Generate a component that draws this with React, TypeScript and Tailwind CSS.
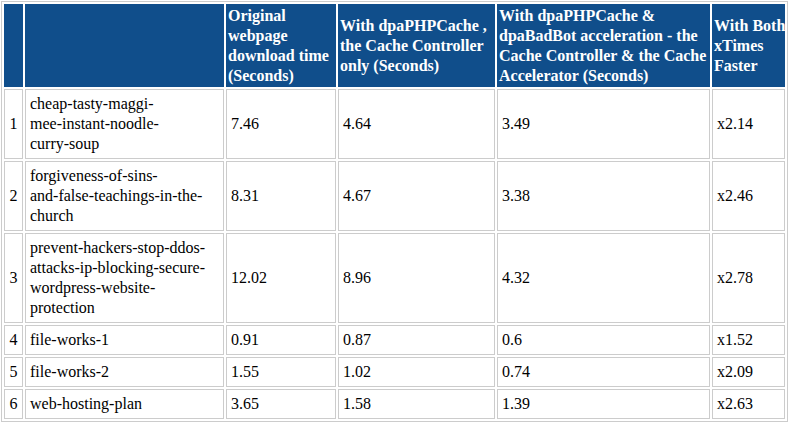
const rows: { n: number; name: string[]; orig: string; ctrl: string; both: string; times: string }[] = [
  { n: 1, name: ['cheap-tasty-maggi-', 'mee-instant-noodle-', 'curry-soup'], orig: '7.46', ctrl: '4.64', both: '3.49', times: 'x2.14' },
  { n: 2, name: ['forgiveness-of-sins-', 'and-false-teachings-in-the-', 'church'], orig: '8.31', ctrl: '4.67', both: '3.38', times: 'x2.46' },
  {
    n: 3,
    name: ['prevent-hackers-stop-ddos-', 'attacks-ip-blocking-secure-', 'wordpress-website-', 'protection'],
    orig: '12.02',
    ctrl: '8.96',
    both: '4.32',
    times: 'x2.78',
  },
  { n: 4, name: ['file-works-1'], orig: '0.91', ctrl: '0.87', both: '0.6', times: 'x1.52' },
  { n: 5, name: ['file-works-2'], orig: '1.55', ctrl: '1.02', both: '0.74', times: 'x2.09' },
  { n: 6, name: ['web-hosting-plan'], orig: '3.65', ctrl: '1.58', both: '1.39', times: 'x2.63' },
];

const headers: string[][] = [
  [],
  [],
  ['Original', 'webpage', 'download time', '(Seconds)'],
  ['With dpaPHPCache ,', 'the Cache Controller', 'only (Seconds)'],
  ['With dpaPHPCache &', 'dpaBadBot acceleration - the', 'Cache Controller & the Cache', 'Accelerator (Seconds)'],
  ['With Both', 'xTimes', 'Faster'],
];

function Lines({ lines }: { lines: string[] }) {
  return (
    <>
      {lines.map((l, i) => (
        <span key={i} className="block whitespace-nowrap">
          {l}
        </span>
      ))}
    </>
  );
}

export default function App() {
  const serif = "font-['Liberation_Serif','Times_New_Roman',serif]";
  const td = `${serif} border border-[#cccccc] px-[4px] py-[4px] align-middle text-left text-[16px] leading-[20px] text-black`;
  return (
    <div className={`${serif} bg-white w-[788px] h-[424px] overflow-hidden`}>
      <table className={`${serif} table-fixed border-separate border-spacing-[2px] border border-[#cccccc] ml-[1px] mt-[1px] w-[787px] text-[16px] leading-[20px] text-black`}>
        <colgroup>
          <col className="w-[19px]" />
          <col className="w-[199px]" />
          <col className="w-[110px]" />
          <col className="w-[157px]" />
          <col className="w-[213px]" />
          <col className="w-[73px]" />
        </colgroup>
        <thead>
          <tr>
            {headers.map((h, i) => (
              <th
                key={i}
                className={`${serif} h-[83px] bg-[#104e8b] border border-[#104e8b] px-px py-0 align-middle text-left text-[16px] leading-[20px] font-bold text-white`}
              >
                <Lines lines={h} />
              </th>
            ))}
          </tr>
        </thead>
        <tbody>
          {rows.map((r) => (
            <tr key={r.n}>
              <td className={`${serif} border border-[#cccccc] px-0 py-[4px] align-middle text-center text-[16px] leading-[20px] text-black`}>
                {r.n}
              </td>
              <td className={td}>
                <Lines lines={r.name} />
              </td>
              <td className={td}>{r.orig}</td>
              <td className={td}>{r.ctrl}</td>
              <td className={td}>{r.both}</td>
              <td className={td}>{r.times}</td>
            </tr>
          ))}
        </tbody>
      </table>
    </div>
  );
}
